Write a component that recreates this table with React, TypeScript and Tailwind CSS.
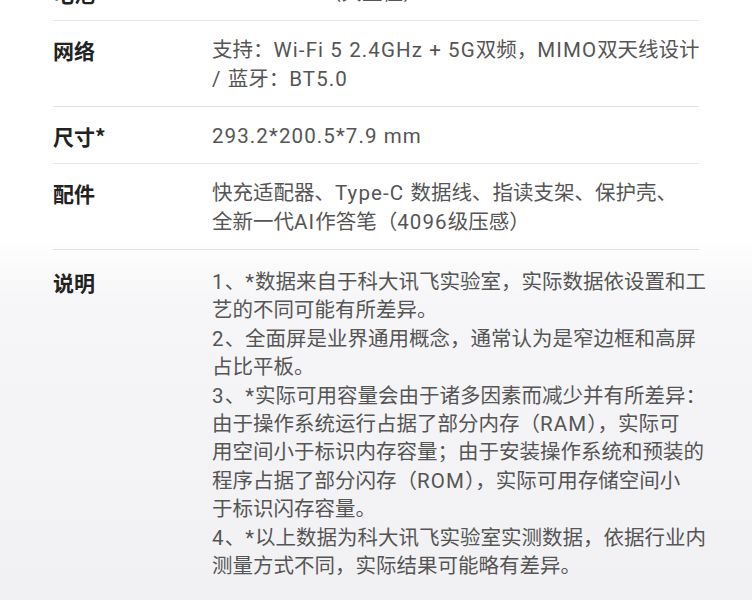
const specs = [
  { label: '电池', lines: ['10100mAh（典型值）'] },
  { label: '网络', lines: ['支持：Wi-Fi 5 2.4GHz + 5G双频，MIMO双天线设计', '/ 蓝牙：BT5.0'] },
  { label: '尺寸*', lines: ['293.2*200.5*7.9 mm'] },
  { label: '配件', lines: ['快充适配器、Type-C 数据线、指读支架、保护壳、', '全新一代AI作答笔（4096级压感）'] },
];

const notes = [
  '1、*数据来自于科大讯飞实验室，实际数据依设置和工',
  '艺的不同可能有所差异。',
  '2、全面屏是业界通用概念，通常认为是窄边框和高屏',
  '占比平板。',
  '3、*实际可用容量会由于诸多因素而减少并有所差异：',
  '由于操作系统运行占据了部分内存（RAM），实际可',
  '用空间小于标识内存容量；由于安装操作系统和预装的',
  '程序占据了部分闪存（ROM），实际可用存储空间小',
  '于标识闪存容量。',
  '4、*以上数据为科大讯飞实验室实测数据，依据行业内',
  '测量方式不同，实际结果可能略有差异。',
];

// latin runs get a bit of tracking so they sit as loose as the original font
function Line({ text }: { text: string }) {
  const parts = text.split(/([\x20-\x7E]+)/).filter(Boolean);
  return (
    <div className="whitespace-nowrap">
      {parts.map((p, i) =>
        /^[\x20-\x7E]+$/.test(p) ? (
          <span key={i} className="tracking-[1.1px]">{p}</span>
        ) : (
          <span key={i}>{p}</span>
        )
      )}
    </div>
  );
}

export default function App() {
  return (
    <div className="h-[600px] w-[752px] overflow-hidden bg-[linear-gradient(to_bottom,#ffffff_0px,#ffffff_235px,#f6f6f8_300px,#f1f1f3_600px)] font-['Noto_Sans_CJK_SC','Noto_Sans',sans-serif]">
      <div className="mx-[53px] -mt-[36px]">
        {specs.map((row) => (
          <div key={row.label} className="flex border-b border-[#e2e2e2] pt-[15px] pb-[12px]">
            <div className="w-[159px] shrink-0 text-[21px] font-bold leading-[29px] text-[#222]">{row.label}</div>
            <div className="font-['Roboto','Noto_Sans_CJK_SC',sans-serif] text-[20.5px] leading-[29px] text-[#555]">
              {row.lines.map((l) => (
                <Line key={l} text={l} />
              ))}
            </div>
          </div>
        ))}
        <div className="flex pt-[18px]">
          <div className="w-[159px] shrink-0 text-[21px] font-bold leading-[28.4px] text-[#222]">说明</div>
          <div className="font-['Roboto','Noto_Sans_CJK_SC',sans-serif] text-[20.5px] leading-[28.4px] text-[#555]">
            {notes.map((l) => (
              <Line key={l} text={l} />
            ))}
          </div>
        </div>
      </div>
    </div>
  );
}
